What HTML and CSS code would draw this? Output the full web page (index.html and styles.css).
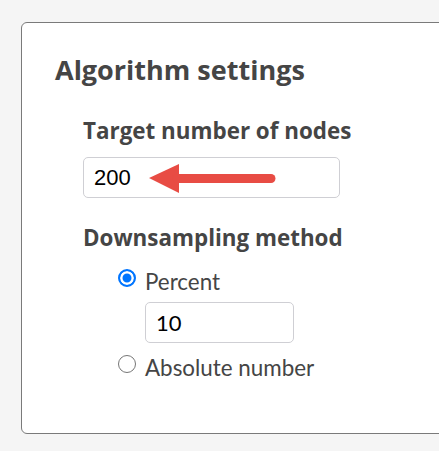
FILE: index.html
```html
<!DOCTYPE html>
<html>
<head>
<meta charset="utf-8">
<link rel="stylesheet" href="styles.css">
</head>
<body>
<section class="panel">
  <h2 class="title">Algorithm settings</h2>
  <div class="group">
    <label class="label" for="target">Target number of nodes</label>
    <div class="field-wrap">
      <input id="target" class="field field-wide" type="text" value="200">
      <svg class="arrow" width="132" height="32" viewBox="0 0 132 32">
        <polygon points="0,14 30,0 30,29" fill="#e84c44"/>
        <line x1="28" y1="14.5" x2="122" y2="14.5" stroke="#e84c44" stroke-width="9" stroke-linecap="round"/>
      </svg>
    </div>
  </div>
  <div class="group group-method">
    <div class="label">Downsampling method</div>
    <div class="options">
      <label class="option">
        <input class="radio" type="radio" name="method" checked>
        <span class="option-text">Percent</span>
      </label>
      <input class="field field-small" type="text" value="10">
      <label class="option option-last">
        <input class="radio" type="radio" name="method">
        <span class="option-text">Absolute number</span>
      </label>
    </div>
  </div>
</section>
</body>
</html>
```

FILE: styles.css
```css
html, body {
  margin: 0;
  padding: 0;
  background: #f5f5f5;
  overflow: hidden;
  width: 439px;
  height: 451px;
}

.panel {
  box-sizing: border-box;
  margin: 22px 0 0 21px;
  width: 480px;
  height: 412px;
  background: #ffffff;
  border: 1px solid #7a7a7a;
  border-radius: 6px;
  padding: 30px 0 0 33px;
}

.title {
  margin: 0;
  font-family: "Open Sans", sans-serif;
  font-weight: 700;
  font-size: 27px;
  line-height: 33px;
  color: #454545;
}

.group {
  padding-left: 28px;
  margin-top: 31px;
}

.group-method {
  margin-top: 26px;
}

.label {
  display: block;
  font-family: "Open Sans", sans-serif;
  font-weight: 700;
  font-size: 22.4px;
  line-height: 27px;
  color: #454545;
}

.field-wrap {
  position: relative;
  margin-top: 13px;
  width: 257px;
}

.field {
  box-sizing: border-box;
  height: 41px;
  border: 1px solid #cfcfd4;
  border-radius: 5px;
  padding: 0 10px;
  font-size: 22px;
  color: #000;
  background: #fff;
  outline: none;
  display: block;
}

.field-wide {
  width: 257px;
  font-family: "Liberation Sans", Arial, sans-serif;
}

.arrow {
  position: absolute;
  left: 66px;
  top: 7px;
}

.options {
  padding-left: 35px;
}

.option {
  display: flex;
  align-items: flex-start;
  gap: 9px;
  font-family: Lato, sans-serif;
  font-size: 22.4px;
  line-height: 27px;
  color: #454545;
}

.option:first-child {
  margin-top: 17px;
}

.option-last {
  margin-top: 11px;
}

.field-small {
  width: 149px;
  margin: 7px 0 0 27px;
  font-family: Lato, sans-serif;
}

.radio {
  appearance: none;
  -webkit-appearance: none;
  box-sizing: border-box;
  width: 18px;
  height: 18px;
  margin: 0.5px 0 0;
  border-radius: 50%;
  border: 1.5px solid #767676;
  background: #fff;
  flex: none;
}

.radio:checked {
  border: 2px solid #0075ff;
  box-shadow: inset 0 0 0 2.5px #fff;
  background: #0075ff;
}
```
